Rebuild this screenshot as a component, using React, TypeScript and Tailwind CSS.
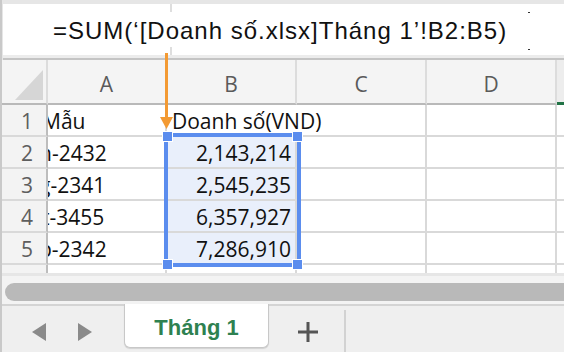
import React from "react";

const cellFont = { fontFamily: '"Open Sans", "Noto Sans", sans-serif' };

function Row({
  n,
  a,
  aShift,
  b,
  selected,
  first,
}: {
  n: number;
  a: string;
  aShift: string;
  b: string;
  selected?: boolean;
  first?: boolean;
}) {
  return (
    <div className="flex h-[32px] bg-white">
      <div className="w-[46px] shrink-0 bg-[#f3f3f3] border-r-2 border-b-2 border-r-[#bdbdbd] border-b-[#d9d9d9] flex items-end justify-center pl-[6px] text-[21px] leading-[28px] text-[#5e5e5e]">
        {n}
      </div>
      <div className="w-[119px] shrink-0 border-r-2 border-b-2 border-[#d9d9d9] overflow-hidden flex items-end text-[21px] leading-[28px] text-[#111] whitespace-nowrap">
        <span className={aShift}>{a}</span>
      </div>
      <div
        className={
          "w-[130px] shrink-0 border-b-2 border-[#d9d9d9] flex items-end text-[21px] leading-[28px] text-[#111] whitespace-nowrap " +
          (first ? "border-r-2 border-r-transparent pl-[5px]" : "border-r-2 justify-end pr-[4px]") +
          (selected ? " bg-[#e9effb]" : "")
        }
      >
        {b}
      </div>
      <div className="w-[130px] shrink-0 border-r-2 border-b-2 border-[#d9d9d9]" />
      <div className="w-[130px] shrink-0 border-r-2 border-b-2 border-[#d9d9d9]" />
      <div className="flex-1 border-b-2 border-[#d9d9d9]" />
    </div>
  );
}

export default function App() {
  return (
    <div
      className="relative w-[564px] h-[352px] overflow-hidden bg-[#efefef] flex flex-col border-l-2 border-[#c9c9c9]"
      style={cellFont}
    >
      {/* Formula bar */}
      <div className="h-[60px] shrink-0 bg-[#e6e6e6] pt-[4px] pl-[1px] flex flex-col">
        <div
          className="h-[51px] bg-white flex items-center pl-[50px] pt-[3px] text-[24px] tracking-[1px] text-[#111] whitespace-nowrap"
          style={{ fontFamily: '"Liberation Sans", Arial, sans-serif' }}
        >
          =SUM(‘[Doanh số.xlsx]Tháng 1’!B2:B5)
        </div>
        <div className="h-[3px] bg-[#ececec]" />
        <div className="h-[2px] bg-[#c4c4c4]" />
      </div>

      {/* Column header */}
      <div className="h-[45px] shrink-0 flex bg-[#f4f4f4] text-[21px] text-[#5a5a5a]">
        <div className="w-[46px] shrink-0 border-r-2 border-b-2 border-r-[#dcdcdc] border-b-[#b9b9b9] flex items-end justify-end pr-[3px] pb-[3px]">
          <svg width="28" height="30" viewBox="0 0 28 30">
            <polygon points="28,0 28,30 0,30" fill="#d6d6d6" />
          </svg>
        </div>
        {["A", "B", "C", "D"].map((c, i) => (
          <div
            key={c}
            className={
              (i === 0 ? "w-[119px]" : "w-[130px]") +
              " shrink-0 border-r-2 border-b-2 border-r-[#dcdcdc] border-b-[#b9b9b9] flex items-center justify-center pt-[6px]"
            }
          >
            {c}
          </div>
        ))}
        <div className="flex-1 border-b-[3px] border-[#217346] bg-[#ededed]" />
      </div>

      {/* Rows */}
      <Row n={1} a="Mẫu" aShift="ml-[-6px]" b="Doanh số(VND)" first />
      <Row n={2} a="n-2432" aShift="ml-[-9px]" b="2,143,214" selected />
      <Row n={3} a="g-2341" aShift="ml-[-9px]" b="2,545,235" selected />
      <Row n={4} a="t-3455" aShift="ml-[-6px]" b="6,357,927" selected />
      <Row n={5} a="b-2342" aShift="ml-[-9px]" b="7,286,910" selected />
      <div className="h-[8px] shrink-0 flex bg-white">
        <div className="w-[46px] shrink-0 bg-[#f3f3f3] border-r-2 border-[#bdbdbd]" />
        <div className="w-[119px] shrink-0 border-r-2 border-[#d9d9d9]" />
        <div className="w-[130px] shrink-0 border-r-2 border-[#d9d9d9]" />
        <div className="w-[130px] shrink-0 border-r-2 border-[#d9d9d9]" />
        <div className="w-[130px] shrink-0 border-r-2 border-[#d9d9d9]" />
      </div>

      {/* Horizontal scrollbar */}
      <div className="h-[33px] shrink-0 bg-[#f3f3f3] border-t-[3px] border-b-2 border-t-[#e6e6e6] border-b-[#d4d4d4] pt-[7px]">
        <div className="ml-[3px] h-[18px] bg-[#b9b9b9] rounded-l-[9px]" />
      </div>

      {/* Sheet tabs */}
      <div className="flex-1 flex items-start bg-[#efefef]">
        <svg width="14" height="18" viewBox="0 0 14 18" className="ml-[30px] mt-[17px]">
          <polygon points="14,0 14,18 0,9" fill="#8a8a8a" />
        </svg>
        <svg width="14" height="18" viewBox="0 0 14 18" className="ml-[32px] mt-[17px]">
          <polygon points="0,0 0,18 14,9" fill="#8a8a8a" />
        </svg>
        <div className="ml-[32px] -mt-[2px] w-[145px] h-[44px] bg-white border border-t-0 border-[#c8c8c8] rounded-b-[6px] shadow-[0_1px_1px_rgba(0,0,0,0.12)] flex items-center justify-center pt-[3px]">
          <span
            className="text-[22px] font-bold text-[#2e8150]"
            style={{ fontFamily: '"Liberation Sans", Arial, sans-serif' }}
          >
            Tháng 1
          </span>
        </div>
        <svg width="20" height="20" viewBox="0 0 20 20" className="ml-[29px] mt-[16px]">
          <rect x="8.5" y="0" width="3" height="20" fill="#555" />
          <rect x="0" y="8.5" width="20" height="3" fill="#555" />
        </svg>
        <div className="ml-[26px] mt-[4px] w-[2px] h-[42px] bg-[#d2d2d2]" />
      </div>

      {/* formula bar small marks */}
      <div className="absolute left-[168px] top-[4px] w-[2px] h-[8px] bg-[#dedede]" />
      <div className="absolute left-[168px] top-[47px] w-[2px] h-[8px] bg-[#dedede]" />
      <div className="absolute left-[526px] top-[12px] w-[2px] h-[1px] bg-[#333]" />
      <div className="absolute left-[526px] top-[49px] w-[2px] h-[1px] bg-[#333]" />

      {/* Orange arrow */}
      <div className="absolute left-[163px] top-[53px] w-[3px] h-[66px] bg-[#f39a33]" />
      <svg className="absolute left-[158px] top-[117px]" width="13" height="12" viewBox="0 0 13 12">
        <polygon points="0,0 13,0 6.5,12" fill="#f39a33" />
      </svg>

      {/* Selection */}
      <div className="absolute left-[162px] top-[133px] w-[137px] h-[134px] border-4 border-[#5b8dee]" />
      <div className="absolute left-[160px] top-[131px] w-[11px] h-[11px] bg-[#5b8dee] border border-white" />
      <div className="absolute left-[290px] top-[131px] w-[11px] h-[11px] bg-[#5b8dee] border border-white" />
      <div className="absolute left-[160px] top-[259px] w-[11px] h-[11px] bg-[#5b8dee] border border-white" />
      <div className="absolute left-[290px] top-[259px] w-[11px] h-[11px] bg-[#5b8dee] border border-white" />
    </div>
  );
}
